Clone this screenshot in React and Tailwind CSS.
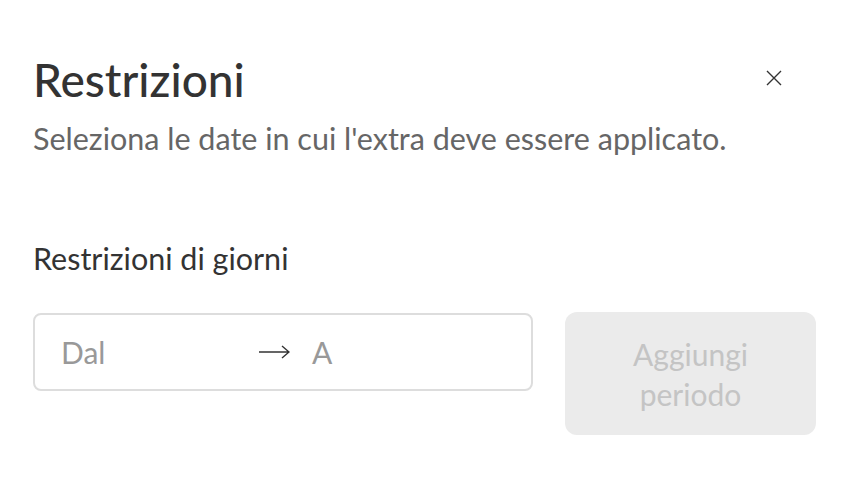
import React from "react";

export default function App() {
  return (
    <div className="w-[846px] h-[496px] bg-white" style={{ fontFamily: "Lato, 'Noto Sans', sans-serif" }}>
      <div className="pl-[33px] pr-[30px] pt-[52px]">
        <div className="flex items-start justify-between">
          <h1 className="text-[46px] leading-[56px] text-[#333333] font-medium">Restrizioni</h1>
          <button className="mt-[18px] mr-[34px] text-[#333333]">
            <svg width="16" height="16" viewBox="0 0 16 16" fill="none" stroke="currentColor" strokeWidth="1.4">
              <path d="M1 1L15 15M15 1L1 15" />
            </svg>
          </button>
        </div>
        <p className="mt-[10px] text-[30.5px] leading-[40px] text-[#666666]">Seleziona le date in cui l'extra deve essere applicato.</p>
        <h2 className="mt-[80px] text-[30.5px] leading-[40px] text-[#333333]">Restrizioni di giorni</h2>
        <div className="mt-[35px] flex items-start gap-[32px]">
          <div className="w-[500px] h-[78px] border-2 border-[#dddddd] rounded-[8px] flex items-center pl-[26px] text-[30px] text-[#999999]">
            <span className="w-[197px]">Dal</span>
            <svg width="32" height="16" viewBox="0 0 32 16" fill="none" stroke="#333333" strokeWidth="1.4" className="mr-[22px]">
              <path d="M1 8H31M24 2L31 8L24 14" />
            </svg>
            <span>A</span>
          </div>
          <button className="w-[251px] h-[123px] rounded-[12px] bg-[#ebebeb] text-[30px] leading-[40px] text-[#c4c4c4] -mt-[1px]">
            Aggiungi<br />periodo
          </button>
        </div>
      </div>
    </div>
  );
}
